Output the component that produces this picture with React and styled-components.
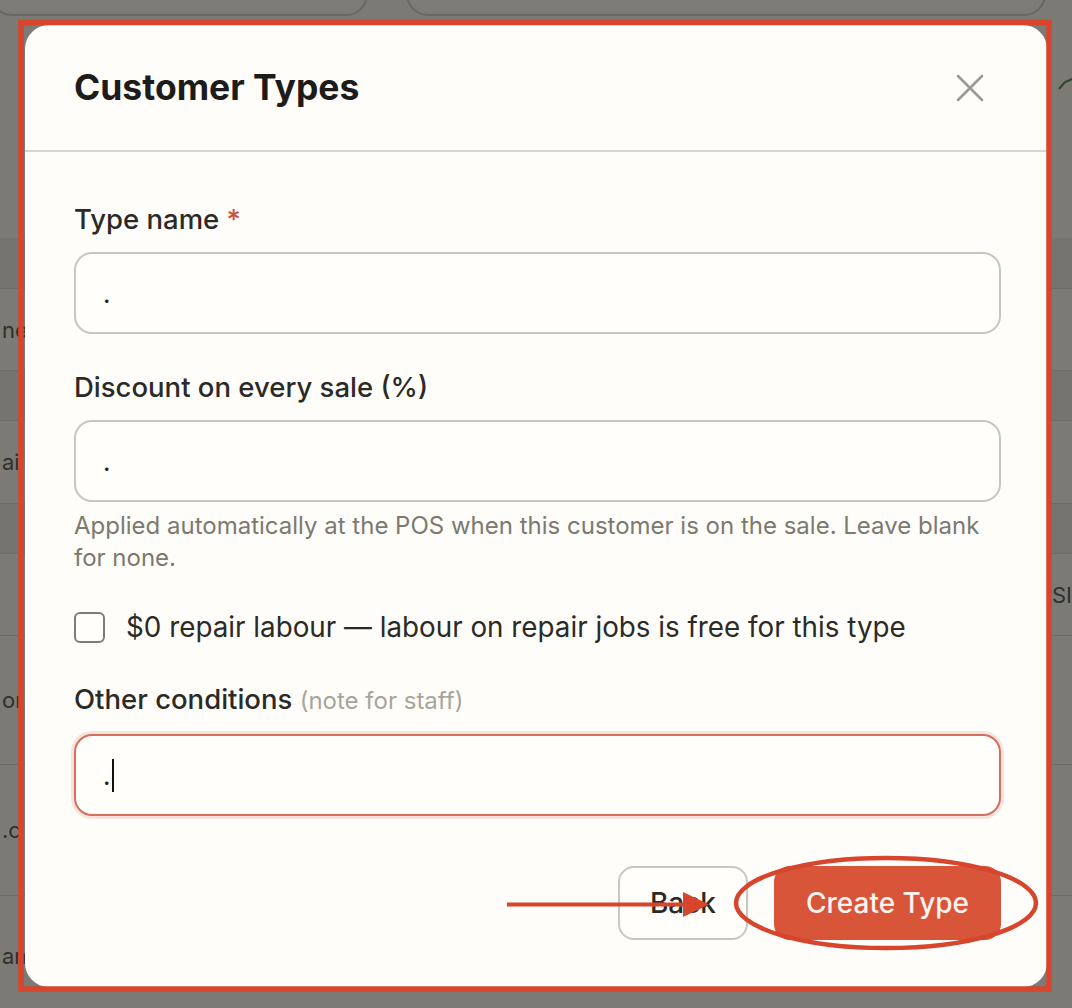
import React from "react";
import styled, { createGlobalStyle } from "styled-components";

const GlobalStyle = createGlobalStyle`
  * { box-sizing: border-box; }
  html, body { margin: 0; padding: 0; }
  body {
    width: 1072px;
    height: 1008px;
    overflow: hidden;
    font-family: Inter, "Noto Sans", "Liberation Sans", sans-serif;
    background: #f4f3ee;
  }
`;

const Page = styled.div`
  position: relative;
  width: 1072px;
  height: 1008px;
  overflow: hidden;
  background: #f4f3ee;
`;

/* ---------- background app (dimmed by the overlay) ---------- */

const Toolbar = styled.div`
  height: 238px;
  display: flex;
  align-items: flex-start;
  gap: 38px;
  margin-left: -10px;
`;

const Pill = styled.div`
  width: ${p => p.w}px;
  height: 46px;
  margin-top: -30px;
  border: 2px solid #c4c2ba;
  border-radius: 22px;
  background: #f7f6f1;
  flex: none;
`;

const CheckMark = styled.svg`
  margin: 76px 0 0 -26px;
  flex: none;
`;

const Table = styled.div`
  display: flex;
  flex-direction: column;
`;

const Row = styled.div`
  height: ${p => p.h}px;
  display: flex;
  align-items: center;
  justify-content: space-between;
  border-bottom: 1px solid #d2d0c8;
  background: ${p => (p.band ? "#e6e4dd" : "#f4f3ee")};
  font-size: 22px;
  color: #3a3935;
`;

const CellText = styled.span`
  padding: 0 ${p => (p.end ? 0 : 2)}px;
`;

const Overlay = styled.div`
  position: absolute;
  inset: 0;
  background: rgba(42, 41, 37, 0.6);
  display: flex;
  justify-content: center;
  padding-top: 25px;
`;

/* ---------- modal ---------- */

const Modal = styled.div`
  width: 1022px;
  height: 962px;
  background: #fefdf9;
  border-radius: 24px;
  display: flex;
  flex-direction: column;
  overflow: hidden;
`;

const Header = styled.div`
  height: 127px;
  flex: none;
  display: flex;
  align-items: center;
  justify-content: space-between;
  padding: 0 62px 0 49px;
  border-bottom: 2px solid #d8d6ce;
`;

const Title = styled.h2`
  margin: 0;
  font-size: 35.5px;
  font-weight: 700;
  color: #1d1c1a;
`;

const CloseButton = styled.button`
  border: none;
  background: none;
  padding: 0;
  width: 30px;
  height: 30px;
  display: flex;
  align-items: center;
  justify-content: center;
`;

const Body = styled.div`
  flex: 1;
  display: flex;
  flex-direction: column;
  padding: 51px 46px 0 49px;
`;

const Field = styled.div`
  display: flex;
  flex-direction: column;
  margin-bottom: ${p => p.mb || 0}px;
`;

const Label = styled.label`
  font-size: 27.5px;
  line-height: 32px;
  font-weight: 500;
  color: #2b2a27;
  margin-bottom: 17px;
`;

const Required = styled.span`
  color: #cf4f3c;
`;

const Note = styled.span`
  font-size: 24px;
  font-weight: 400;
  color: #a7a59b;
`;

const TextBox = styled.div`
  height: 82px;
  border: 2px solid ${p => (p.focused ? "#d6705e" : "#c9c7bd")};
  border-radius: 18px;
  background: #fffefb;
  display: flex;
  align-items: center;
  padding-left: 27px;
  font-size: 26px;
  color: #1d1c1a;
  box-shadow: ${p => (p.focused ? "0 0 0 3px rgba(214, 112, 94, 0.18)" : "none")};
`;

const Caret = styled.span`
  display: inline-block;
  width: 2px;
  height: 33px;
  margin-left: 1px;
  background: #111;
`;

const Help = styled.p`
  margin: 8px 0 0;
  font-size: 24px;
  line-height: 32px;
  color: #7b7970;
`;

const CheckRow = styled.label`
  display: flex;
  align-items: center;
  gap: 21px;
  height: 32px;
  margin-bottom: 40px;
  font-size: 27.8px;
  color: #2b2a27;
`;

const CheckBox = styled.span`
  width: 31px;
  height: 31px;
  border: 2px solid #7d7c76;
  border-radius: 6px;
  background: #fffefb;
  flex: none;
`;

const Footer = styled.div`
  display: flex;
  justify-content: flex-end;
  gap: 26px;
  padding: 50px 0 0 0;
`;

const Button = styled.button`
  height: 74px;
  padding: 0 30px;
  border-radius: 16px;
  font-family: inherit;
  font-size: 28px;
  font-weight: 500;
  border: 2px solid ${p => (p.primary ? "#d8553a" : "#c9c7bd")};
  background: ${p => (p.primary ? "#d8553a" : "#fffefb")};
  color: ${p => (p.primary ? "#fff3ee" : "#2b2a27")};
`;

/* ---------- annotation marks drawn over the shot ---------- */

const Marks = styled.svg`
  position: absolute;
  inset: 0;
  pointer-events: none;
`;

const rows = [
  { h: 51, band: true },
  { h: 82, text: "ne" },
  { h: 50, band: true },
  { h: 83, text: "ai" },
  { h: 50, band: true },
  { h: 82, right: "SI" },
  { h: 129, text: "or" },
  { h: 131, text: ".c" },
  { h: 120, text: "am" },
];

export default function App() {
  return (
    <Page>
      <GlobalStyle />
      <Toolbar>
        <Pill w={378} />
        <Pill w={640} />
        <CheckMark width="20" height="14" viewBox="0 0 20 14">
          <path d="M1 13 L7 6 L19 1" fill="none" stroke="#3f6b3a" strokeWidth="2" />
        </CheckMark>
      </Toolbar>
      <Table>
        {rows.map((r, i) => (
          <Row key={i} h={r.h} band={r.band}>
            <CellText>{r.text}</CellText>
            <CellText end>{r.right}</CellText>
          </Row>
        ))}
      </Table>

      <Overlay>
        <Modal>
          <Header>
            <Title>Customer Types</Title>
            <CloseButton aria-label="Close">
              <svg width="28" height="28" viewBox="0 0 28 28">
                <path
                  d="M2 2 L26 26 M26 2 L2 26"
                  stroke="#9c9b92"
                  strokeWidth="2.6"
                  strokeLinecap="round"
                />
              </svg>
            </CloseButton>
          </Header>

          <Body>
            <Field mb={37}>
              <Label>
                Type name <Required>*</Required>
              </Label>
              <TextBox>.</TextBox>
            </Field>

            <Field mb={37}>
              <Label>Discount on every sale (%)</Label>
              <TextBox>.</TextBox>
              <Help>
                Applied automatically at the POS when this customer is on the
                sale. Leave blank for none.
              </Help>
            </Field>

            <CheckRow>
              <CheckBox />
              $0 repair labour — labour on repair jobs is free for this type
            </CheckRow>

            <Field>
              <Label>
                Other conditions <Note>(note for staff)</Note>
              </Label>
              <TextBox focused>
                .<Caret />
              </TextBox>
            </Field>

            <Footer>
              <Button>Back</Button>
              <Button primary>Create Type</Button>
            </Footer>
          </Body>
        </Modal>
      </Overlay>

      <Marks width="1072" height="1008" viewBox="0 0 1072 1008">
        <rect
          x="21"
          y="22.5"
          width="1028"
          height="966.5"
          fill="none"
          stroke="#d6452c"
          strokeWidth="5.5"
        />
        <ellipse
          cx="886"
          cy="903"
          rx="150"
          ry="45"
          fill="none"
          stroke="#d6452c"
          strokeWidth="4.5"
        />
        <line
          x1="507"
          y1="904.5"
          x2="690"
          y2="904.5"
          stroke="#d6452c"
          strokeWidth="4"
        />
        <polygon points="683,892 709,904.5 683,917" fill="#d6452c" />
      </Marks>
    </Page>
  );
}
